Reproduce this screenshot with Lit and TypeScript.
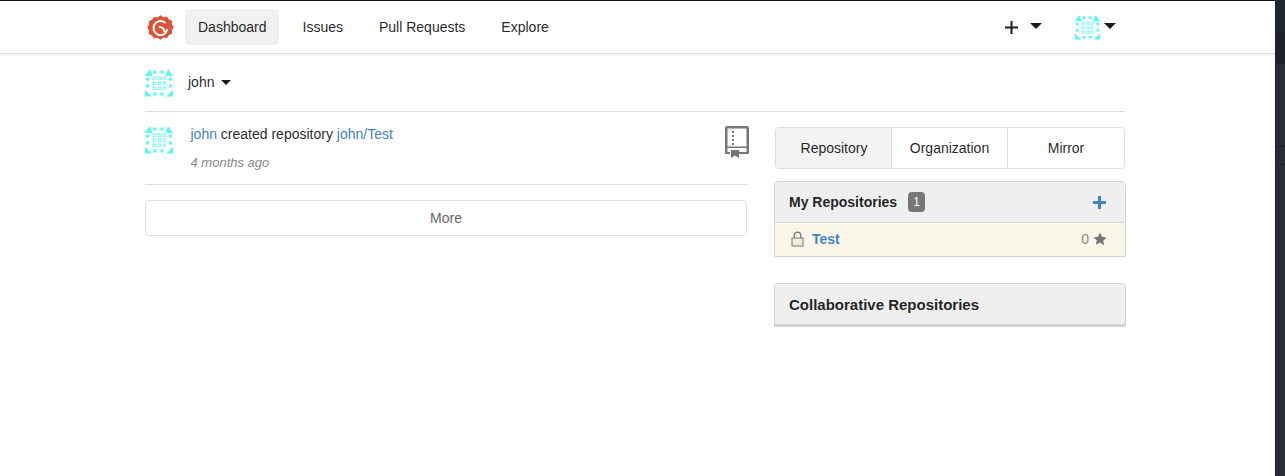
import { LitElement, html, css, svg } from "lit";
import { customElement } from "lit/decorators.js";

const identicon = (size: number) => {
  const c = "#55f7f7";
  const dots: [number, number][] = [
    [8.5, 1.5], [15.5, 1.5], [8.5, 23.5], [15.5, 23.5],
    [1, 8.5], [1, 15.5], [24, 8.5], [24, 15.5],
  ];
  const inner: any[] = [];
  for (let bx = 0; bx < 3; bx++) {
    for (let by = 0; by < 3; by++) {
      for (let x = 0; x < 2; x++) {
        for (let y = 0; y < 2; y++) {
          inner.push(svg`<rect x=${7.5 + bx * 5 + x * 2} y=${7.5 + by * 5 + y * 2} width="1.500" height="1.500" fill=${c} opacity="0.85"></rect>`);
        }
      }
    }
  }
  return html`<svg width=${size} height=${size} viewBox="0 0 28 28" class="ident">
    <path fill=${c} d="M5 0 L7.500 7 L0 7 Z M23 0 L28 7 L20.500 7 Z M0 21 L7 27.500 L0 27.500 Z M28 21 L21 27.500 L28 27.500 Z"></path>
    ${dots.map(([x, y]) => svg`<rect x=${x} y=${y} width="3" height="3" fill=${c}></rect>`)}
    ${inner}
  </svg>`;
};

const caret = html`<span class="caret"></span>`;

@customElement("app-root")
export class AppRoot extends LitElement {
  static styles = css`
    :host {
      display: flex;
      height: 476px;
      background: #fff;
      font-family: "Liberation Sans", Arial, sans-serif;
      font-size: 14px;
      color: rgba(0, 0, 0, 0.87);
      overflow: hidden;
    }
    .main {
      width: 1275px;
      flex: none;
      border-top: 1px solid #111;
      box-sizing: border-box;
    }
    .strip {
      width: 10px;
      flex: none;
      display: flex;
      flex-direction: column;
      box-sizing: border-box;
      border-left: 1px solid #1d2028;
    }
    .strip .s1 { height: 32px; background: #1e2730; }
    .strip .s2 { height: 32px; background: #1c2129; }
    .strip .s3 { height: 82px; background: #2a2d38; border-bottom: 1px solid #1f222a; }
    .strip .s4 { height: 17px; background: #2a2d38; border-bottom: 1px solid #1f222a; }
    .strip .s5 { flex: 1; background: #2a2d38; }
    a { color: #4183c4; text-decoration: none; }
    .ident { display: block; }
    .nav {
      height: 52px;
      border-bottom: 1px solid #ddd;
      box-shadow: 0 1px 2px rgba(34, 36, 38, 0.08);
    }
    .container { width: 980px; margin-left: 145px; }
    .nav .container { display: flex; align-items: center; height: 52px; }
    .logo { width: 27px; height: 27px; display: block; margin: 0 11px 0 2px; }
    .item {
      color: rgba(0, 0, 0, 0.87);
      height: 36px;
      padding: 0 12px 0 13px;
      display: flex;
      align-items: center;
      border-radius: 4px;
      margin-right: 11px;
    }
    .item.active { background: #f0f0f0; }
    .right { margin-left: auto; display: flex; align-items: center; }
    .plus { display: flex; align-items: center; margin-right: 33px; }
    .plus svg { margin-right: 12px; display: block; }
    .caret {
      display: inline-block;
      width: 0;
      height: 0;
      border-left: 6.5px solid transparent;
      border-right: 6.5px solid transparent;
      border-top: 6.5px solid #1b1c1d;
    }
    .me { display: flex; align-items: center; margin-right: 9px; }
    .me .caret { margin-left: 4px; margin-bottom: 3px; }
    .plus .caret { margin-bottom: 3px; }
    .ctx {
      display: flex;
      align-items: center;
      height: 57px;
      border-bottom: 1px solid #ddd;
      box-sizing: border-box;
      margin-top: 1px;
      padding-bottom: 1px;
    }
    .ctx .name { margin-left: 15px; padding-bottom: 2px; }
    .ctx .caret {
      margin-left: 7px;
      border-left-width: 5px;
      border-right-width: 5px;
      border-top-width: 5px;
    }
    .cols { display: flex; justify-content: space-between; align-items: flex-start; }
    .left { width: 602px; }
    .rightcol { width: 352px; margin-top: 15px; margin-right: -1px; }
    .feed {
      display: flex;
      height: 73px;
      border-bottom: 1px solid #ddd;
      box-sizing: border-box;
      padding-top: 14px;
    }
    .feed .text { margin-left: 17.5px; flex: 1; }
    .feed .line { line-height: 16px; height: 16px; }
    .feed .time {
      margin-top: 13px;
      font-size: 13px;
      font-style: italic;
      color: #888;
      line-height: 16px;
    }
    .book { display: block; margin: 0 -2px 0 0; }
    .more {
      margin-top: 15px;
      height: 36px;
      border: 1px solid #ddd;
      border-radius: 4px;
      display: flex;
      align-items: center;
      justify-content: center;
      color: #666;
      box-sizing: border-box;
    }
    .tabs {
      display: grid;
      grid-template-columns: 115px 116px 1fr;
      width: 350px;
      height: 42px;
      border: 1px solid #ddd;
      border-radius: 4px;
      box-sizing: border-box;
      overflow: hidden;
      margin-left: 1px;
    }
    .tabs div {
      display: flex;
      align-items: center;
      justify-content: center;
      border-left: 1px solid #ddd;
    }
    .tabs div:first-child { border-left: 0; background: #f3f3f3; padding-left: 1px; }
    .panel {
      margin-top: 12px;
      border: 1px solid #d4d4d5;
      border-radius: 4px 4px 0 0;
      box-sizing: border-box;
    }
    .head {
      background: #efefef;
      height: 40px;
      display: flex;
      align-items: center;
      padding: 0 19px 0 14px;
      border-bottom: 1px solid #d4d4d5;
      font-weight: 700;
      font-size: 14px;
      border-radius: 4px 4px 0 0;
    }
    .badge {
      margin-left: 11px;
      background: #767676;
      color: #fff;
      font-size: 12px;
      font-weight: 400;
      border-radius: 4px;
      width: 17px;
      height: 20px;
      display: flex;
      align-items: center;
      justify-content: center;
    }
    .add { margin-left: auto; display: block; }
    .row {
      background: #fbf7e8;
      height: 33px;
      display: flex;
      align-items: center;
      padding: 0 18px 2px 16px;
      box-sizing: border-box;
    }
    .row a { font-weight: 700; margin-left: 8px; }
    .row .count { margin-left: auto; color: #888; display: flex; align-items: center; gap: 4px; }
    .collab { margin-top: 26px; }
    .collab .head { font-size: 15px; height: 40px; border-bottom-width: 2px; }
  `;

  render() {
    return html`
      <div class="main">
        <div class="nav">
          <div class="container">
            <svg class="logo" viewBox="0 0 30 30" aria-hidden="true">
              <path fill="#d9553a" d="M15 1.500l3.400 2 3.800-.7 2.100 3.200 3.500 1.500-.1 3.900 2.100 3.400-2.100 3.300.1 3.900-3.500 1.500-2.100 3.300-3.800-.700L15 28.500l-3.400-2-3.800.700-2.100-3.300-3.500-1.500.1-3.900L.2 15.100l2.100-3.400-.1-3.900L5.700 6.300l2.100-3.200 3.800.700z"></path>
              <path fill="none" stroke="#fff" stroke-width="2.100" stroke-linecap="round" d="M19.800 9.500A7.800 7.800 0 1 0 22.500 17.500"></path>
              <path fill="none" stroke="#fff" stroke-width="2.100" stroke-linecap="round" d="M14 14.500q4.500 .3 5.500 5"></path>
            </svg>
            <a class="item active">Dashboard</a>
            <a class="item">Issues</a>
            <a class="item">Pull Requests</a>
            <a class="item">Explore</a>
            <div class="right">
              <div class="plus">
                <svg width="13" height="13" viewBox="0 0 13 13"><path fill="#1b1c1d" d="M5.500 0h2V5.500H13v2H7.500V13h-2V7.500H0v-2H5.500z"></path></svg>
                ${caret}
              </div>
              <div class="me">${identicon(25)}${caret}</div>
            </div>
          </div>
        </div>
        <div class="container">
          <div class="ctx">${identicon(28)}<span class="name">john</span>${caret}</div>
          <div class="cols">
            <div class="left">
              <div class="feed">
                ${identicon(28)}
                <div class="text">
                  <div class="line"><a>john</a> created repository <a>john/Test</a></div>
                  <div class="time">4 months ago</div>
                </div>
                <svg class="book" width="24" height="32" viewBox="0 0 24 32">
                  <path fill="#767676" fill-rule="evenodd" d="M2 0h20a2 2 0 0 1 2 2v25a1 1 0 0 1-1 1H14v-2h7.500v-4h-19v4H5v2H1a1 1 0 0 1-1-1V2a2 2 0 0 1 2-2zM2.500 2.500v18h19v-18z"></path>
                  <path fill="#767676" d="M7 5h2v2H7zM7 9h2v2H7zM7 13h2v2H7zM7 17h2v2H7zM6 24h8v8l-4-2.500-4 2.500z"></path>
                </svg>
              </div>
              <div class="more">More</div>
            </div>
            <div class="rightcol">
              <div class="tabs"><div>Repository</div><div>Organization</div><div>Mirror</div></div>
              <div class="panel">
                <div class="head">
                  My Repositories <span class="badge">1</span>
                  <svg class="add" width="13" height="13" viewBox="0 0 13 13"><path fill="#4183c4" d="M5 0h3v5h5v3H8v5H5V8H0V5h5z"></path></svg>
                </div>
                <div class="row">
                  <svg width="13" height="16" viewBox="0 0 13 16">
                    <path fill="none" stroke="#777" stroke-width="1.300" d="M3.200 7V4.500a3.300 3.300 0 0 1 6.600 0V7"></path>
                    <rect x="1" y="7" width="11" height="8" fill="#f3ead7" stroke="#777" stroke-width="1"></rect>
                  </svg>
                  <a>Test</a>
                  <span class="count">0
                    <svg width="14" height="14" viewBox="0 0 24 24"><path fill="#767676" d="M12 1l3.400 7.300 7.900 1-5.800 5.500 1.500 7.900L12 18l-7 3.700 1.500-7.900L.7 9.300l7.900-1z"></path></svg>
                  </span>
                </div>
              </div>
              <div class="panel collab"><div class="head">Collaborative Repositories</div></div>
            </div>
          </div>
        </div>
      </div>
      <div class="strip"><div class="s1"></div><div class="s2"></div><div class="s3"></div><div class="s4"></div><div class="s5"></div></div>
    `;
  }
}
